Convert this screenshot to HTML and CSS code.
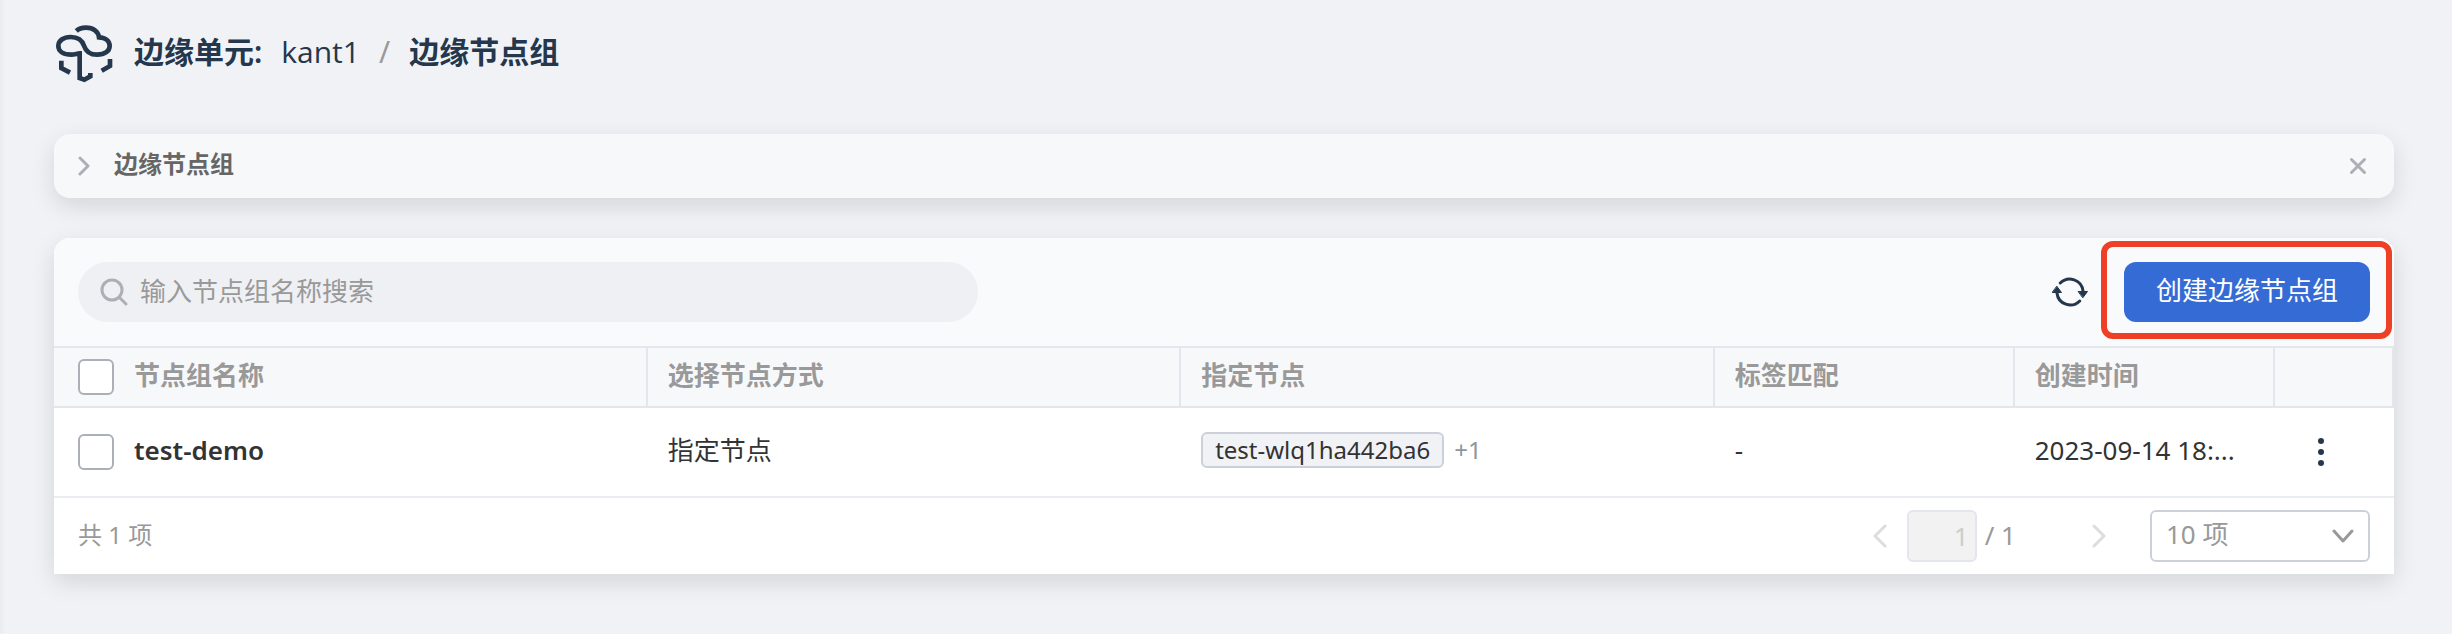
FILE: index.html
```html
<!DOCTYPE html>
<html lang="zh-CN">
<head>
<meta charset="utf-8">
<meta name="viewport" content="width=device-width, initial-scale=1">
<title>边缘节点组</title>
<link rel="stylesheet" href="styles.css">
</head>
<body>
<main class="page">
  <header class="page-header">
    <svg class="logo" viewBox="46 45 172 174" fill="none" stroke="currentColor" stroke-width="14" aria-hidden="true">
      <path d="M109 63C117 55 127 53 138 53C160 53 175 65 177 82C198 83 209 94 209 108C209 123 195 134 171 134C148 134 137 122 132 107C127 92 115 81 92 81C70 81 55 92 55 108C55 124 70 134 94 134C104 134 112 130 119 130V204L133 209L151 199V189"/>
      <path d="M64 152V174L90 188M210 147V168L185 182"/>
    </svg>
    <nav class="breadcrumb" aria-label="路径">
      <span class="crumb-label">边缘单元:</span>
      <a class="crumb-link" href="#">kant1</a>
      <span class="crumb-slash">/</span>
      <h1 class="crumb-current">边缘节点组</h1>
    </nav>
  </header>

  <section class="banner">
    <button class="icon-button banner-toggle" type="button" aria-label="展开">
      <svg width="12" height="20" viewBox="0 0 12 20"><path d="M2 2L10 10L2 18"/></svg>
    </button>
    <h2 class="banner-title">边缘节点组</h2>
    <button class="icon-button banner-close" type="button" aria-label="关闭">
      <svg width="18" height="18" viewBox="0 0 18 18"><path d="M2.500 2.500L15.500 15.500M15.500 2.500L2.500 15.500"/></svg>
    </button>
  </section>

  <section class="card">
    <div class="toolbar">
      <label class="search">
        <svg class="search-icon" width="28" height="28" viewBox="0 0 28 28" aria-hidden="true"><circle cx="12" cy="12" r="10"/><path d="M19.500 19.500L26 26"/></svg>
        <input class="search-input" type="search" placeholder="输入节点组名称搜索" aria-label="输入节点组名称搜索">
      </label>
      <div class="toolbar-actions">
        <button class="icon-button refresh" type="button" aria-label="刷新">
          <svg width="36" height="32" viewBox="0 0 36 32" aria-hidden="true">
            <path class="refresh-arc" d="M8.300 7A13.300 13.300 0 0 1 31 15M27.700 25A13.300 13.300 0 0 1 5 17"/>
            <path class="refresh-head" d="M26.500 15.500H35.500L31 21.500ZM.5 16.500H9.500L5 10.500Z"/>
          </svg>
        </button>
        <div class="create-wrap">
          <button class="create" type="button">创建边缘节点组</button>
        </div>
      </div>
    </div>

    <table class="grid">
      <colgroup>
        <col class="col-check"><col class="col-name"><col class="col-mode"><col class="col-nodes"><col class="col-labels"><col class="col-time"><col>
      </colgroup>
      <thead>
        <tr>
          <th class="check-cell"><input class="check" type="checkbox" aria-label="全选"></th>
          <th class="name-cell">节点组名称</th>
          <th>选择节点方式</th>
          <th>指定节点</th>
          <th>标签匹配</th>
          <th>创建时间</th>
          <th></th>
        </tr>
      </thead>
      <tbody>
        <tr>
          <td class="check-cell"><input class="check" type="checkbox" aria-label="选择 test-demo"></td>
          <td class="name-cell"><a class="name-link" href="#">test-demo</a></td>
          <td>指定节点</td>
          <td><div class="nodes"><span class="tag">test-wlq1ha442ba6</span><span class="more">+1</span></div></td>
          <td>-</td>
          <td>2023-09-14 18:...</td>
          <td class="menu-cell">
            <button class="icon-button menu" type="button" aria-label="更多操作">
              <svg width="12" height="30" viewBox="0 0 12 30"><circle cx="6" cy="4" r="3"/><circle cx="6" cy="15" r="3"/><circle cx="6" cy="26" r="3"/></svg>
            </button>
          </td>
        </tr>
      </tbody>
    </table>

    <footer class="footer">
      <span class="total">共 1 项</span>
      <div class="pager">
        <button class="icon-button page-step" type="button" aria-label="上一页" disabled>
          <svg width="14" height="24" viewBox="0 0 14 24"><path d="M12 2L2 12L12 22"/></svg>
        </button>
        <input class="page-input" type="text" value="1" aria-label="页码" disabled>
        <span class="page-count">/ 1</span>
        <button class="icon-button page-step page-next" type="button" aria-label="下一页" disabled>
          <svg width="14" height="24" viewBox="0 0 14 24"><path d="M2 2L12 12L2 22"/></svg>
        </button>
        <div class="size">
          <select class="size-select" aria-label="每页数量"><option>10 项</option><option>20 项</option><option>50 项</option></select>
          <svg class="size-arrow" width="22" height="16" viewBox="0 0 22 16" aria-hidden="true"><path d="M2 3L11 13L20 3"/></svg>
        </div>
      </div>
    </footer>
  </section>
</main>
</body>
</html>
```
FILE: styles.css
```css
:root {
  --ink: #24374c;
  --text: #333;
  --muted: #999;
  --icon: #abafb7;
  --line: #e4e6ed;
  --shadow: 0 8px 24px rgba(0, 0, 0, 0.12);
}

* { box-sizing: border-box; }

body {
  margin: 0;
  background: #f1f2f6;
  box-shadow: inset 6px 0 6px -5px rgba(0, 0, 0, 0.05);
  color: var(--text);
  font: 26px/36px "Noto Sans", "Noto Sans CJK SC", sans-serif;
}

button, input, select { font: inherit; color: inherit; }
a { color: inherit; text-decoration: none; }

.page { padding: 24px 58px 59px 54px; }

.page-header {
  display: flex;
  align-items: center;
  gap: 20px;
  height: 60px;
  color: var(--ink);
}
.logo { width: 60px; height: 58px; }
.breadcrumb {
  display: flex;
  align-items: center;
  gap: 19px;
  padding-bottom: 4px;
  font-size: 30px;
  line-height: 40px;
}
.crumb-label, .crumb-current { margin: 0; font-size: 30px; font-weight: 600; }
.crumb-link { font-family: "Open Sans", "Noto Sans", sans-serif; }
.crumb-slash { color: var(--muted); }

.icon-button {
  display: flex;
  flex: none;
  padding: 0;
  border: 0;
  background: none;
}
.icon-button svg {
  fill: none;
  stroke: currentColor;
  stroke-width: 3;
  stroke-linecap: round;
  stroke-linejoin: round;
}

.banner {
  display: flex;
  align-items: center;
  height: 64px;
  margin-top: 50px;
  padding: 0 27px 0 24px;
  border-radius: 16px;
  background: #f7f8fa;
  box-shadow: var(--shadow);
}
.banner-toggle, .banner-close { color: var(--icon); }
.banner-title {
  flex: 1;
  margin: 0 0 0 24px;
  padding-bottom: 4px;
  color: #666;
  font-size: 24px;
  font-weight: 600;
}

.card {
  margin-top: 40px;
  border-radius: 16px 16px 0 0;
  background: #fff;
  box-shadow: var(--shadow);
}

.toolbar {
  display: flex;
  align-items: center;
  justify-content: space-between;
  padding: 24px;
  border-radius: 16px 16px 0 0;
  background: #f9fafc;
}
.search {
  display: flex;
  align-items: center;
  gap: 12px;
  width: 900px;
  height: 60px;
  padding: 0 22px;
  border-radius: 30px;
  background: #eff0f4;
}
.search-icon { flex: none; fill: none; stroke: var(--icon); stroke-width: 3; stroke-linecap: round; }
.search-input {
  flex: 1;
  min-width: 0;
  padding: 0 0 2px;
  border: 0;
  outline: 0;
  background: none;
}
.search-input::placeholder { color: var(--muted); opacity: 1; }

.toolbar-actions { display: flex; align-items: center; gap: 36px; }
.refresh { color: var(--ink); }
.refresh .refresh-head { fill: currentColor; stroke-width: 1; }
.create-wrap { position: relative; }
.create-wrap::after {
  content: "";
  position: absolute;
  inset: -21px -22px -17px -23px;
  border: 6px solid #ee4026;
  border-radius: 12px;
  pointer-events: none;
}
.create {
  display: block;
  height: 60px;
  padding: 0 32px 4px;
  border: 0;
  border-radius: 12px;
  background: #346bd5;
  color: #fff;
}

.grid {
  width: 100%;
  border-collapse: separate;
  border-spacing: 0;
  table-layout: fixed;
}
.col-check { width: 80px; }
.col-name { width: 21.950%; }
.col-mode, .col-nodes { width: 22.800%; }
.col-labels { width: 300px; }
.col-time { width: 260px; }

.grid th, .grid td {
  padding: 0 20px 4px;
  overflow: hidden;
  text-align: left;
  text-overflow: ellipsis;
  white-space: nowrap;
}
.grid th {
  height: 62px;
  border: solid var(--line);
  border-width: 2px 2px 2px 0;
  background: #f7f8fa;
  color: var(--muted);
  font-weight: 600;
}
.grid td { height: 90px; border-bottom: 2px solid #ebecf1; }
.grid .check-cell { padding: 0 0 0 24px; border-right: 0; }
.grid .name-cell { padding-left: 0; }
.grid .menu-cell { padding: 0 0 0 40px; }

.check {
  display: block;
  width: 36px;
  height: 36px;
  margin: 0;
  border: 2px solid var(--icon);
  border-radius: 6px;
  background: #fff;
  appearance: none;
}
.check:checked { background: #346bd5; }
.name-link { font-weight: 600; }
.nodes { display: flex; align-items: center; gap: 10px; font-size: 24px; }
.tag {
  padding: 0 12px;
  border: 2px solid #ccd0db;
  border-radius: 6px;
  background: #f1f2f6;
  line-height: 32px;
}
.more { color: #8f959e; }
.menu { color: var(--ink); }
.menu svg { fill: currentColor; stroke: none; }

.footer {
  display: flex;
  align-items: center;
  justify-content: space-between;
  height: 76px;
  padding: 0 24px;
  color: var(--muted);
}
.total { padding-bottom: 2px; font-size: 24px; }
.pager { display: flex; align-items: center; }
.page-step { color: #ddd; }
.page-input {
  width: 70px;
  height: 52px;
  margin: 0 8px 0 20px;
  padding: 0 6px;
  border: 2px solid var(--line);
  border-radius: 6px;
  background: #f2f2f2;
  color: #ccc;
  text-align: right;
}
.page-count { padding-bottom: 2px; }
.page-next { margin: 0 44px 0 76px; }
.size { display: grid; align-items: center; width: 220px; }
.size-select, .size-arrow { grid-area: 1 / 1; }
.size-select {
  width: 100%;
  height: 52px;
  padding: 0 48px 4px 14px;
  border: 2px solid #ccd0db;
  border-radius: 6px;
  background: #fff;
  appearance: none;
}
.size-arrow {
  justify-self: end;
  margin-right: 16px;
  fill: none;
  stroke: var(--muted);
  stroke-width: 3;
  stroke-linecap: round;
  stroke-linejoin: round;
  pointer-events: none;
}
```
